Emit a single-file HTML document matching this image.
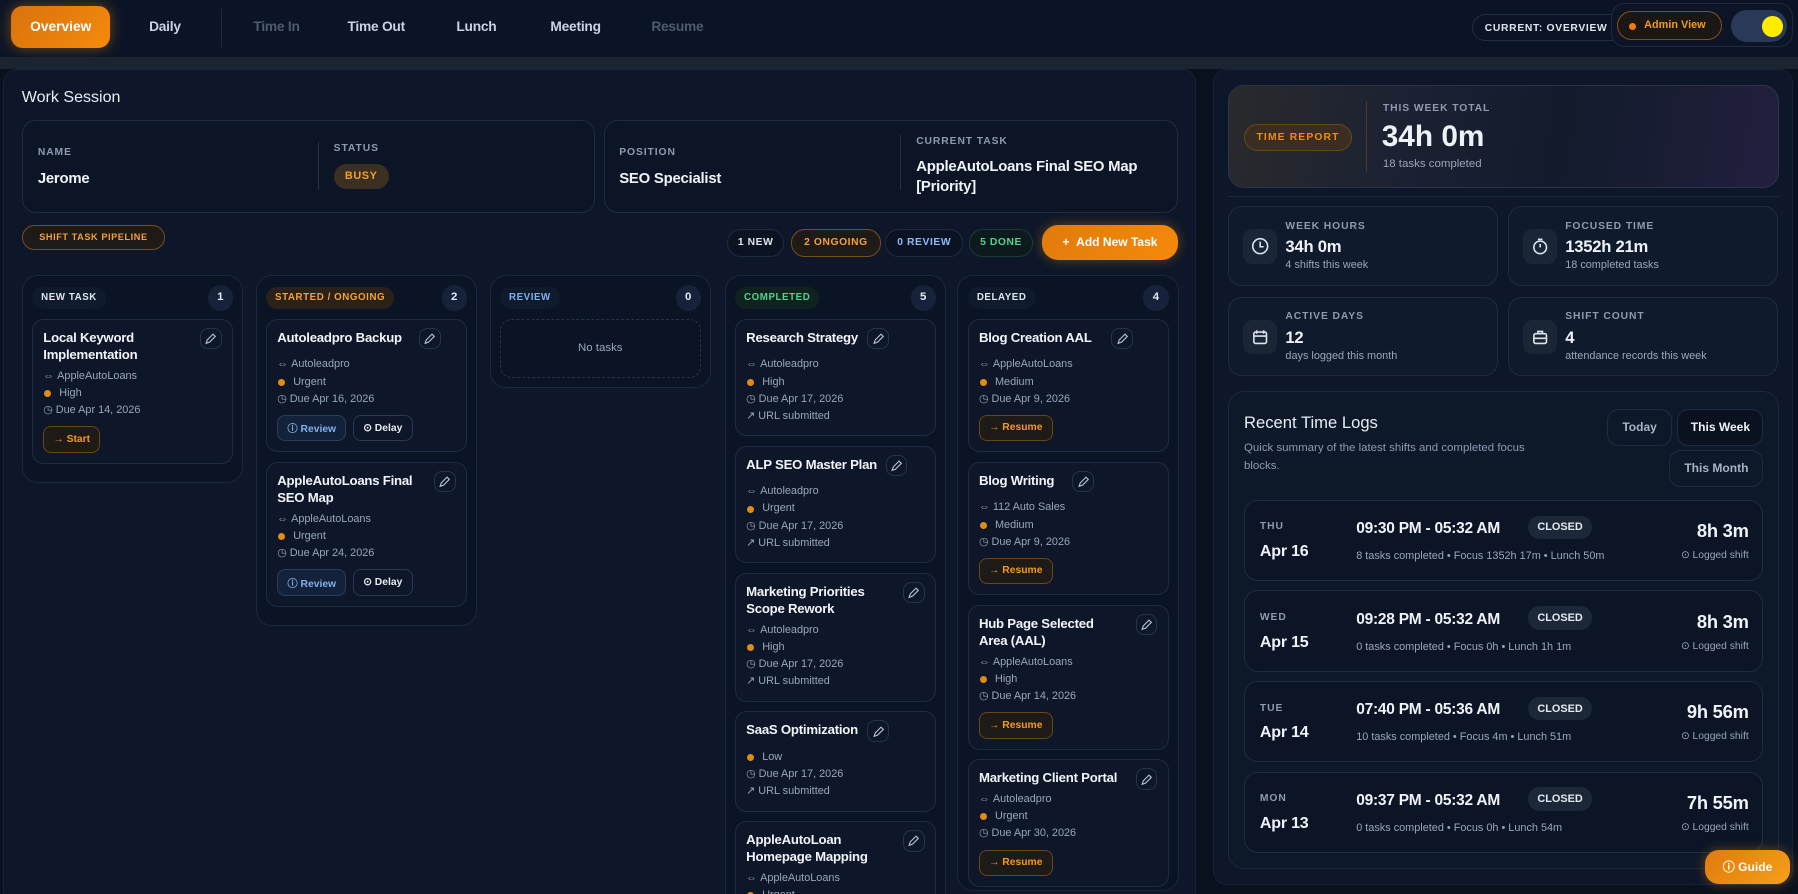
<!DOCTYPE html>
<html><head><meta charset="utf-8"><style>
*{box-sizing:border-box;margin:0;padding:0}
html,body{width:1798px;height:894px;overflow:hidden;background:#0a111e}
body{font-family:"Liberation Sans",sans-serif;color:#e6ebf3}
#r{zoom:1.14668;width:1568px;height:780px;position:relative;background:#0a111e;overflow:hidden}
.a{position:absolute}
.top{left:0;top:0;width:1568px;height:50px;background:#0b1426}
.strip{left:0;top:50px;width:1568px;height:10px;background:#1b2431}
.nav{top:17px;font-size:12px;font-weight:bold;color:#c9d3e3;letter-spacing:-.2px}
.dim{color:#4d5b70}
.ov{left:10px;top:5px;width:86px;height:37px;border-radius:10px;background:linear-gradient(135deg,#d9730d,#f58a0b);box-shadow:0 0 12px rgba(245,138,11,.45);color:#fff;font-size:12px;font-weight:bold;text-align:center;line-height:37px}
.panel{background:#0d1729;border-radius:12px;border:1px solid #16213a}
.box{border:1px solid #1f2b40;border-radius:12px;background:#0c1526}
.lbl{font-size:9px;font-weight:bold;letter-spacing:.8px;color:#8d9ab0}
.val{font-size:13px;font-weight:bold;color:#f0f3f8;letter-spacing:-.2px}
.pill{border-radius:12px;font-size:9px;font-weight:bold;letter-spacing:.5px;text-align:center}
.col{border:1px solid #1b2640;border-radius:14px;background:#0b1424;width:193px;padding:8px 8px 8px 8px}
.ch{display:flex;justify-content:space-between;align-items:center;height:22px;margin-bottom:7px}
.ct{font-size:8.5px;font-weight:bold;letter-spacing:.5px;padding:5px 8px;border-radius:10px;background:#0f1a2c}
.cn{width:22px;height:22px;border-radius:11px;background:#16223a;font-size:10px;font-weight:bold;text-align:center;line-height:22px}
.card{border:1px solid #1f2b42;border-radius:10px;background:#0d1729;padding:8px 9px 9px 9px;margin-bottom:8px;position:relative}
.t{font-size:11.5px;font-weight:bold;line-height:15px;color:#f2f4f8;padding-right:30px;margin-bottom:4px;letter-spacing:-.2px}
.m{font-size:9.5px;color:#9aa6ba;line-height:15px;display:flex;align-items:center;gap:5px}
.dot{width:6px;height:6px;border-radius:3px;background:#e08a17;margin:0 2px 0 1px}
.ed{position:absolute;right:9px;top:7px;width:19px;height:19px;border:1px solid #263349;border-radius:7px}
.ed svg{position:absolute;left:4px;top:4px}
.btns{display:flex;gap:6px;margin-top:6px}
.b{height:23px;border-radius:7px;font-size:9px;font-weight:bold;display:flex;align-items:center;gap:4px;padding:0 8px;border:1px solid #2a3750}
.rv{background:#14213a;color:#7fb0ee;border-color:#2a3d5e}
.dl{color:#e8ecf2}
.st{color:#f59a1a;background:#1d1a17;border-color:#6b4518}
.stat{border:1px solid #1f2b42;border-radius:12px;background:#0f1a2c}
.ic{position:absolute;left:12px;width:30px;height:30px;border-radius:8px;background:#1a2536}
.ic svg{position:absolute;left:7px;top:7px}
.log{left:13px;width:453px;height:71px;border:1px solid #1f2b42;border-radius:12px;background:#0b1526}
.cl{background:#1c2738;border-radius:10px;font-size:9.5px;font-weight:bold;padding:5px 8px;color:#e4e9f1}
.sub{font-size:9.5px;color:#9aa6ba}
</style></head><body><div id="r">
<div class="a top"></div>
<div class="a ov">Overview</div>
<div class="a nav" style="left:130px">Daily</div>
<div class="a" style="left:193px;top:8px;width:1px;height:33px;background:#1f2a3c"></div>
<div class="a nav dim" style="left:221px">Time In</div>
<div class="a nav" style="left:303px">Time Out</div>
<div class="a nav" style="left:398px">Lunch</div>
<div class="a nav" style="left:480px">Meeting</div>
<div class="a nav dim" style="left:568px">Resume</div>
<div class="a" style="left:1284px;top:12px;width:140px;height:24px;border:1px solid #222e41;border-radius:12px;font-size:9px;font-weight:bold;letter-spacing:.6px;padding:7px 0 0 10px;color:#e0e6ee">CURRENT: OVERVIEW</div>
<div class="a" style="left:1405px;top:3px;width:159px;height:38px;border:1px solid #1f2a3d;border-radius:12px;background:#0c1527"></div>
<div class="a" style="left:1410px;top:10px;width:92px;height:25px;border:1px solid #8a4e12;border-radius:13px;background:#1a1715;font-size:9.5px;font-weight:bold;color:#f59a1a;padding-left:23px;line-height:23px"><span class="a" style="left:10px;top:9px;width:6px;height:6px;border-radius:3px;background:#f07c0c"></span>Admin View</div>
<div class="a" style="left:1510px;top:9px;width:48px;height:28px;border-radius:14px;background:#2a3957"><span class="a" style="left:27px;top:5px;width:18px;height:18px;border-radius:9px;background:#ffec00"></span></div>
<div class="a strip"></div>

<div class="a panel" style="left:3px;top:60px;width:1040px;height:730px"></div>
<div class="a" style="left:19px;top:77px;font-size:14px;color:#e8edf4">Work Session</div>
<div class="a box" style="left:19px;top:105px;width:500px;height:81px"></div>
<div class="a lbl" style="left:33px;top:128px">NAME</div>
<div class="a val" style="left:33px;top:149px">Jerome</div>
<div class="a" style="left:277px;top:124px;width:1px;height:42px;background:#273246"></div>
<div class="a lbl" style="left:291px;top:125px">STATUS</div>
<div class="a pill" style="left:291px;top:143px;width:48px;height:22px;line-height:22px;background:#3a2f22;color:#f2a02a;font-size:9.5px">BUSY</div>
<div class="a box" style="left:527px;top:105px;width:500px;height:81px"></div>
<div class="a lbl" style="left:540px;top:128px">POSITION</div>
<div class="a val" style="left:540px;top:149px">SEO Specialist</div>
<div class="a" style="left:785px;top:118px;width:1px;height:48px;background:#273246"></div>
<div class="a lbl" style="left:799px;top:119px">CURRENT TASK</div>
<div class="a val" style="left:799px;top:138px;line-height:17px;width:195px">AppleAutoLoans Final SEO Map [Priority]</div>

<div class="a pill" style="left:19px;top:196px;width:125px;height:22px;line-height:20px;border:1px solid #7a4d1c;background:#1d1a18;color:#f5a03a;font-size:8px">SHIFT TASK PIPELINE</div>
<div class="a pill" style="left:634px;top:200px;width:50px;height:24px;line-height:22px;border:1px solid #1e2a3e;background:#0b1322;color:#dfe5ee">1 NEW</div>
<div class="a pill" style="left:690px;top:200px;width:78px;height:24px;line-height:22px;border:1px solid #7a4d1c;background:#1d1a18;color:#f5a03a">2 ONGOING</div>
<div class="a pill" style="left:772px;top:200px;width:68px;height:24px;line-height:22px;border:1px solid #1e2a3e;background:#0b1322;color:#8cbcf5">0 REVIEW</div>
<div class="a pill" style="left:845px;top:200px;width:56px;height:24px;line-height:22px;border:1px solid #1e3a30;background:#0c1a1e;color:#4fd48a">5 DONE</div>
<div class="a" style="left:909px;top:196px;width:118px;height:31px;border-radius:14px;background:linear-gradient(135deg,#e07a0c,#f58a0b);box-shadow:0 0 10px rgba(245,138,11,.4);font-size:10.5px;font-weight:bold;color:#fff;line-height:31px;text-align:center">+&nbsp;&nbsp;Add New Task</div>

<div class="a col" style="left:19px;top:240px">
<div class="ch"><span class="ct" style="color:#dfe5ee">NEW TASK</span><span class="cn">1</span></div>
<div class="card"><div class="t">Local Keyword Implementation</div><div class="ed"><svg width="10" height="10" viewBox="0 0 10 10" fill="none" stroke="#b9c3d3" stroke-width="1"><path d="M1 9l1-3 5-5 2 2-5 5z"/></svg></div>
<div class="m">⇔&nbsp;AppleAutoLoans</div><div class="m"><span class="dot"></span>High</div><div class="m">◷&nbsp;Due Apr 14, 2026</div>
<div class="btns"><div class="b st">→&nbsp;Start</div></div></div>
</div>

<div class="a col" style="left:223px;top:240px">
<div class="ch"><span class="ct" style="color:#f5a03a;background:#2a2118">STARTED / ONGOING</span><span class="cn">2</span></div>
<div class="card"><div class="t">Autoleadpro Backup</div><div class="ed" style="right:22px"><svg width="10" height="10" viewBox="0 0 10 10" fill="none" stroke="#b9c3d3" stroke-width="1"><path d="M1 9l1-3 5-5 2 2-5 5z"/></svg></div>
<div class="m" style="margin-top:9px">⇔&nbsp;Autoleadpro</div><div class="m"><span class="dot"></span>Urgent</div><div class="m">◷&nbsp;Due Apr 16, 2026</div>
<div class="btns"><div class="b rv">ⓘ Review</div><div class="b dl">⊙ Delay</div></div></div>
<div class="card"><div class="t">AppleAutoLoans Final SEO Map</div><div class="ed"><svg width="10" height="10" viewBox="0 0 10 10" fill="none" stroke="#b9c3d3" stroke-width="1"><path d="M1 9l1-3 5-5 2 2-5 5z"/></svg></div>
<div class="m">⇔&nbsp;AppleAutoLoans</div><div class="m"><span class="dot"></span>Urgent</div><div class="m">◷&nbsp;Due Apr 24, 2026</div>
<div class="btns"><div class="b rv">ⓘ Review</div><div class="b dl">⊙ Delay</div></div></div>
</div>

<div class="a col" style="left:427px;top:240px">
<div class="ch"><span class="ct" style="color:#7fb0ee">REVIEW</span><span class="cn">0</span></div>
<div style="height:52px;border:1px dashed #25324a;border-radius:10px;font-size:10px;color:#9aa6ba;text-align:center;line-height:50px">No tasks</div>
</div>

<div class="a col" style="left:632px;top:240px;height:560px">
<div class="ch"><span class="ct" style="color:#4fd48a;background:#0f2220">COMPLETED</span><span class="cn">5</span></div>
<div class="card"><div class="t">Research Strategy</div><div class="ed" style="right:40px"><svg width="10" height="10" viewBox="0 0 10 10" fill="none" stroke="#b9c3d3" stroke-width="1"><path d="M1 9l1-3 5-5 2 2-5 5z"/></svg></div>
<div class="m" style="margin-top:9px">⇔&nbsp;Autoleadpro</div><div class="m"><span class="dot"></span>High</div><div class="m">◷&nbsp;Due Apr 17, 2026</div><div class="m">↗&nbsp;URL submitted</div></div>
<div class="card"><div class="t">ALP SEO Master Plan</div><div class="ed" style="right:24px"><svg width="10" height="10" viewBox="0 0 10 10" fill="none" stroke="#b9c3d3" stroke-width="1"><path d="M1 9l1-3 5-5 2 2-5 5z"/></svg></div>
<div class="m" style="margin-top:9px">⇔&nbsp;Autoleadpro</div><div class="m"><span class="dot"></span>Urgent</div><div class="m">◷&nbsp;Due Apr 17, 2026</div><div class="m">↗&nbsp;URL submitted</div></div>
<div class="card"><div class="t">Marketing Priorities Scope Rework</div><div class="ed"><svg width="10" height="10" viewBox="0 0 10 10" fill="none" stroke="#b9c3d3" stroke-width="1"><path d="M1 9l1-3 5-5 2 2-5 5z"/></svg></div>
<div class="m">⇔&nbsp;Autoleadpro</div><div class="m"><span class="dot"></span>High</div><div class="m">◷&nbsp;Due Apr 17, 2026</div><div class="m">↗&nbsp;URL submitted</div></div>
<div class="card"><div class="t">SaaS Optimization</div><div class="ed" style="right:40px"><svg width="10" height="10" viewBox="0 0 10 10" fill="none" stroke="#b9c3d3" stroke-width="1"><path d="M1 9l1-3 5-5 2 2-5 5z"/></svg></div>
<div class="m" style="margin-top:9px"><span class="dot"></span>Low</div><div class="m">◷&nbsp;Due Apr 17, 2026</div><div class="m">↗&nbsp;URL submitted</div></div>
<div class="card"><div class="t">AppleAutoLoan Homepage Mapping</div><div class="ed"><svg width="10" height="10" viewBox="0 0 10 10" fill="none" stroke="#b9c3d3" stroke-width="1"><path d="M1 9l1-3 5-5 2 2-5 5z"/></svg></div>
<div class="m">⇔&nbsp;AppleAutoLoans</div><div class="m"><span class="dot"></span>Urgent</div><div class="m">◷&nbsp;Due Apr 14, 2026</div></div>
</div>

<div class="a col" style="left:835px;top:240px;height:537px">
<div class="ch"><span class="ct" style="color:#dfe5ee">DELAYED</span><span class="cn">4</span></div>
<div class="card"><div class="t">Blog Creation AAL</div><div class="ed" style="right:30px"><svg width="10" height="10" viewBox="0 0 10 10" fill="none" stroke="#b9c3d3" stroke-width="1"><path d="M1 9l1-3 5-5 2 2-5 5z"/></svg></div>
<div class="m" style="margin-top:9px">⇔&nbsp;AppleAutoLoans</div><div class="m"><span class="dot"></span>Medium</div><div class="m">◷&nbsp;Due Apr 9, 2026</div>
<div class="btns"><div class="b st">→&nbsp;Resume</div></div></div>
<div class="card"><div class="t">Blog Writing</div><div class="ed" style="right:64px"><svg width="10" height="10" viewBox="0 0 10 10" fill="none" stroke="#b9c3d3" stroke-width="1"><path d="M1 9l1-3 5-5 2 2-5 5z"/></svg></div>
<div class="m" style="margin-top:9px">⇔&nbsp;112 Auto Sales</div><div class="m"><span class="dot"></span>Medium</div><div class="m">◷&nbsp;Due Apr 9, 2026</div>
<div class="btns"><div class="b st">→&nbsp;Resume</div></div></div>
<div class="card"><div class="t">Hub Page Selected Area (AAL)</div><div class="ed"><svg width="10" height="10" viewBox="0 0 10 10" fill="none" stroke="#b9c3d3" stroke-width="1"><path d="M1 9l1-3 5-5 2 2-5 5z"/></svg></div>
<div class="m">⇔&nbsp;AppleAutoLoans</div><div class="m"><span class="dot"></span>High</div><div class="m">◷&nbsp;Due Apr 14, 2026</div>
<div class="btns"><div class="b st">→&nbsp;Resume</div></div></div>
<div class="card"><div class="t">Marketing Client Portal</div><div class="ed"><svg width="10" height="10" viewBox="0 0 10 10" fill="none" stroke="#b9c3d3" stroke-width="1"><path d="M1 9l1-3 5-5 2 2-5 5z"/></svg></div>
<div class="m">⇔&nbsp;Autoleadpro</div><div class="m"><span class="dot"></span>Urgent</div><div class="m">◷&nbsp;Due Apr 30, 2026</div>
<div class="btns"><div class="b st">→&nbsp;Resume</div></div></div>
</div>

<div class="a panel" style="left:1058px;top:60px;width:506px;height:712px;background:#0d1729"></div>
<div class="a" style="left:1071px;top:74px;width:480px;height:90px;border-radius:14px;border:1px solid #2a3446;background:linear-gradient(100deg,#2a2a2c 0%,#1c2232 30%,#121b2c 60%,#221f3e 100%)"></div>
<div class="a pill" style="left:1085px;top:108px;width:94px;height:24px;line-height:22px;border:1px solid #6b4518;background:#3a2e22;color:#f08a1a;letter-spacing:1px">TIME REPORT</div>
<div class="a" style="left:1191px;top:88px;width:1px;height:62px;background:#4a3a24"></div>
<div class="a lbl" style="left:1206px;top:90px">THIS WEEK TOTAL</div>
<div class="a" style="left:1205px;top:105px;font-size:26px;font-weight:bold;color:#eef2f7">34h 0m</div>
<div class="a" style="left:1206px;top:138px;font-size:10px;color:#9aa6ba">18 tasks completed</div>
<div class="a" style="left:1071px;top:171px;width:480px;height:1px;background:#1c2740"></div>

<div class="a stat" style="left:1071px;top:180px;width:235px;height:69px"><div class="ic" style="top:19px"><svg width="16" height="16" viewBox="0 0 16 16" fill="none" stroke="#dbe2ec" stroke-width="1.4"><circle cx="8" cy="8" r="6.5"/><path d="M8 4v4.5h3"/></svg></div></div>
<div class="a lbl" style="left:1121px;top:193px">WEEK HOURS</div><div class="a val" style="left:1121px;top:207px;font-size:14.5px">34h 0m</div><div class="a sub" style="left:1121px;top:226px">4 shifts this week</div>
<div class="a stat" style="left:1315px;top:180px;width:236px;height:69px"><div class="ic" style="top:19px"><svg width="16" height="16" viewBox="0 0 16 16" fill="none" stroke="#dbe2ec" stroke-width="1.4"><circle cx="8" cy="9" r="5.5"/><path d="M6 2h4M8 6v3"/></svg></div></div>
<div class="a lbl" style="left:1365px;top:193px">FOCUSED TIME</div><div class="a val" style="left:1365px;top:207px;font-size:14.5px">1352h 21m</div><div class="a sub" style="left:1365px;top:226px">18 completed tasks</div>
<div class="a stat" style="left:1071px;top:259px;width:235px;height:69px"><div class="ic" style="top:19px"><svg width="16" height="16" viewBox="0 0 16 16" fill="none" stroke="#dbe2ec" stroke-width="1.4"><rect x="2.5" y="3.5" width="11" height="10" rx="1.5"/><path d="M2.5 7h11M5 2v3M11 2v3"/></svg></div></div>
<div class="a lbl" style="left:1121px;top:271px">ACTIVE DAYS</div><div class="a val" style="left:1121px;top:286px;font-size:14.5px">12</div><div class="a sub" style="left:1121px;top:305px">days logged this month</div>
<div class="a stat" style="left:1315px;top:259px;width:236px;height:69px"><div class="ic" style="top:19px"><svg width="16" height="16" viewBox="0 0 16 16" fill="none" stroke="#dbe2ec" stroke-width="1.4"><rect x="2.5" y="5" width="11" height="8.5" rx="1.5"/><path d="M6 5V3h4v2M2.5 9h11"/></svg></div></div>
<div class="a lbl" style="left:1365px;top:271px">SHIFT COUNT</div><div class="a val" style="left:1365px;top:286px;font-size:14.5px">4</div><div class="a sub" style="left:1365px;top:305px">attendance records this week</div>

<div class="a" style="left:1071px;top:341px;width:480px;height:417px;border:1px solid #1c2740;border-radius:14px;background:#0d1829">
<div class="a" style="left:13px;top:18px;font-size:14.5px;color:#e8edf4">Recent Time Logs</div>
<div class="a" style="left:13px;top:41px;width:245px;font-size:10px;line-height:16px;color:#8d9ab0">Quick summary of the latest shifts and completed focus blocks.</div>
<div class="a" style="left:330px;top:15px;width:56px;height:32px;border:1px solid #1f2b42;border-radius:10px;font-size:10.5px;font-weight:bold;color:#a8b3c5;text-align:center;line-height:30px">Today</div>
<div class="a" style="left:391px;top:15px;width:75px;height:32px;border:1px solid #1f2b42;border-radius:10px;background:#0a1220;font-size:10.5px;font-weight:bold;color:#f0f3f8;text-align:center;line-height:30px">This Week</div>
<div class="a" style="left:384px;top:51px;width:82px;height:32px;border:1px solid #1f2b42;border-radius:10px;font-size:10.5px;font-weight:bold;color:#a8b3c5;text-align:center;line-height:30px">This Month</div>

<div class="a log" style="top:94px">
<div class="a lbl" style="left:13px;top:18px">THU</div><div class="a val" style="left:13px;top:36px;font-size:14px">Apr 16</div>
<div class="a val" style="left:97px;top:17px;font-size:13.5px">09:30 PM - 05:32 AM</div><div class="a cl" style="left:247px;top:13px">CLOSED</div>
<div class="a sub" style="left:97px;top:43px">8 tasks completed • Focus 1352h 17m • Lunch 50m</div>
<div class="a val" style="right:12px;top:17px;font-size:16px">8h 3m</div><div class="a" style="right:12px;top:42px;font-size:9px;color:#9aa6ba">⊙ Logged shift</div></div>
<div class="a log" style="top:173px">
<div class="a lbl" style="left:13px;top:18px">WED</div><div class="a val" style="left:13px;top:36px;font-size:14px">Apr 15</div>
<div class="a val" style="left:97px;top:17px;font-size:13.5px">09:28 PM - 05:32 AM</div><div class="a cl" style="left:247px;top:13px">CLOSED</div>
<div class="a sub" style="left:97px;top:43px">0 tasks completed • Focus 0h • Lunch 1h 1m</div>
<div class="a val" style="right:12px;top:17px;font-size:16px">8h 3m</div><div class="a" style="right:12px;top:42px;font-size:9px;color:#9aa6ba">⊙ Logged shift</div></div>
<div class="a log" style="top:252px">
<div class="a lbl" style="left:13px;top:18px">TUE</div><div class="a val" style="left:13px;top:36px;font-size:14px">Apr 14</div>
<div class="a val" style="left:97px;top:17px;font-size:13.5px">07:40 PM - 05:36 AM</div><div class="a cl" style="left:247px;top:13px">CLOSED</div>
<div class="a sub" style="left:97px;top:43px">10 tasks completed • Focus 4m • Lunch 51m</div>
<div class="a val" style="right:12px;top:17px;font-size:16px">9h 56m</div><div class="a" style="right:12px;top:42px;font-size:9px;color:#9aa6ba">⊙ Logged shift</div></div>
<div class="a log" style="top:331px">
<div class="a lbl" style="left:13px;top:18px">MON</div><div class="a val" style="left:13px;top:36px;font-size:14px">Apr 13</div>
<div class="a val" style="left:97px;top:17px;font-size:13.5px">09:37 PM - 05:32 AM</div><div class="a cl" style="left:247px;top:13px">CLOSED</div>
<div class="a sub" style="left:97px;top:43px">0 tasks completed • Focus 0h • Lunch 54m</div>
<div class="a val" style="right:12px;top:17px;font-size:16px">7h 55m</div><div class="a" style="right:12px;top:42px;font-size:9px;color:#9aa6ba">⊙ Logged shift</div></div>
</div>

<div class="a" style="left:1487px;top:741px;width:74px;height:30px;border-radius:12px;background:linear-gradient(135deg,#e07a0c,#f5a01a);box-shadow:0 0 10px rgba(245,138,11,.4);font-size:10.5px;font-weight:bold;color:#fff;line-height:30px;text-align:center">ⓘ Guide</div>
</div></body></html>
